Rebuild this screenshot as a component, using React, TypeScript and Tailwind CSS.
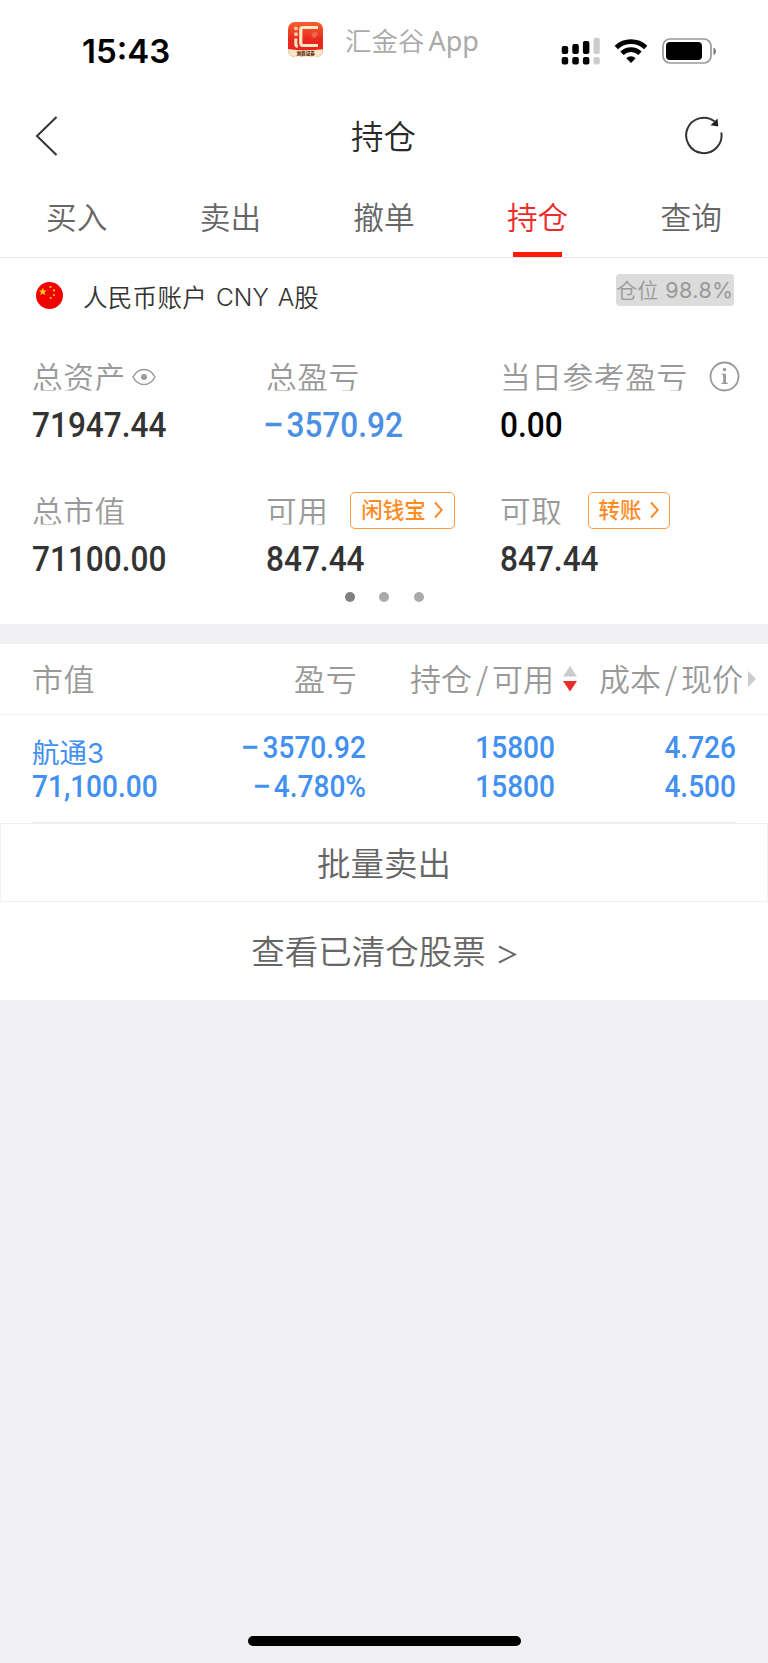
import type { ReactNode } from "react";

const CJK = "font-['Noto_Sans_CJK_SC',sans-serif] font-[350]";
const NUM = "font-['Roboto',sans-serif] font-medium whitespace-nowrap";

function StatusBar() {
  return (
    <div className="flex h-[100px] items-start text-black">
      <div className="w-[288px] pt-[33px] pl-[82px] font-['Inter',sans-serif] text-[33px] leading-[36px] font-semibold">
        15:43
      </div>
      <svg className="mt-[22px] h-[36px] w-[36px] shrink-0" viewBox="0 0 36 36">
        <defs>
          <linearGradient id="logo" x1="0" y1="0" x2="0" y2="1">
            <stop offset="0" stopColor="#f4602f" />
            <stop offset="0.5" stopColor="#e9281f" />
            <stop offset="1" stopColor="#e8201c" />
          </linearGradient>
          <clipPath id="logoClip">
            <rect width="35" height="35" rx="7" />
          </clipPath>
        </defs>
        <g clipPath="url(#logoClip)">
          <rect width="36" height="36" fill="url(#logo)" />
          <path d="M0 27 Q17 29.500 36 27 V36 H0Z" fill="#fbe6c8" />
        </g>
        <path d="M30 5.500 H14.500 Q12.800 5.500 12.800 7.500 V21 Q12.800 23.500 15 23.500 H30" fill="none" stroke="#fbe9c6" strokeWidth="3.200" />
        <circle cx="8" cy="6.500" r="2" fill="#f7c9a0" />
        <circle cx="8" cy="12.300" r="2" fill="#f7c9a0" />
        <path d="M7.800 16.500 V22.500 Q7.800 24 9.800 24.500" fill="none" stroke="#fbe9c6" strokeWidth="3" />
        <path d="M23.500 12.300 Q25 9.500 27 10.200 Q30.500 9.500 29.500 13 Q28 15.500 26.500 16 Q23 14.500 23.500 12.300Z" fill="#f0644a" />
        <text x="8.500" y="33" fontSize="5" fontWeight="900" textLength="18.500" lengthAdjust="spacingAndGlyphs" fill="#5e2c12" fontFamily="Noto Sans CJK SC, sans-serif">
          浙商证券
        </text>
      </svg>
      <div className={`${CJK} flex pt-[22px] pl-[21px] text-[26.500px] leading-[36px] whitespace-nowrap text-[#aaaaaa]`}>
        <span>汇金谷</span>
        <span className="pt-px pl-[4px] font-['Noto_Sans',sans-serif] text-[27px] font-normal">App</span>
      </div>
      <svg className="mt-[34px] ml-auto h-[34px] w-[156px] shrink-0" viewBox="560 34 156 34">
        <g fill="#000">
          <rect x="561.700" y="46" width="6.500" height="8" rx="2" />
          <rect x="572.300" y="44" width="6.500" height="10" rx="2" />
          <rect x="582.900" y="41" width="6.500" height="13" rx="2" />
          <rect x="593.500" y="37.700" width="6.300" height="16.300" rx="2" fill="#cccccc" />
          <rect x="561.700" y="57" width="6.500" height="7.600" rx="2" />
          <rect x="572.300" y="57" width="6.500" height="7.600" rx="2" />
          <rect x="582.900" y="57" width="6.500" height="7.600" rx="2" />
          <rect x="593.500" y="57" width="6.300" height="7.600" rx="2" fill="#cccccc" />
        </g>
        <g fill="none" stroke="#000" strokeWidth="4.800">
          <path d="M616.300 47.500 A21.500 21.500 0 0 1 645.700 47.500" />
          <path d="M622 53.300 A13 13 0 0 1 640 53.300" />
        </g>
        <path d="M631 63 L626.300 58.200 A6.700 6.700 0 0 1 635.700 58.200Z" />
        <rect x="663" y="39" width="48" height="24" rx="7" fill="none" stroke="#999" strokeWidth="1.700" />
        <rect x="666" y="42" width="36" height="18" rx="4" />
        <path d="M713.500 47.500 Q716 48.500 716 51.200 T713.500 55Z" fill="#777" />
      </svg>
      <div className="w-[52px] shrink-0" />
    </div>
  );
}

function TitleBar() {
  return (
    <div className="flex h-[72px] items-center justify-between pr-[44px] pl-[34px]">
      <svg className="h-[42px] w-[26px]" viewBox="0 0 26 42" fill="none" stroke="#333" strokeWidth="2">
        <path d="M22.500 2 L3 21 L22.500 40" />
      </svg>
      <h1 className={`${CJK} pb-[2px] pl-[23px] text-[32.500px] leading-[60px] text-[#2a2a2a]`}>持仓</h1>
      <svg className="h-[40px] w-[40px]" viewBox="684 116 40 40" fill="none" stroke="#333" strokeWidth="2">
        <path d="M721.300 132.500 A17.700 17.700 0 1 1 714.500 121.300" />
        <path d="M717.500 118.500 L718.300 126.500 L710.500 125.300Z" fill="#222" stroke="none" />
      </svg>
    </div>
  );
}

function Tabs() {
  const tabs = ["买入", "卖出", "撤单", "持仓", "查询"];
  return (
    <nav className="grid h-[86px] grid-cols-5 border-b border-[#e8e8e8]">
      {tabs.map((t) => (
        <div key={t} className="flex flex-col items-center justify-between">
          <span className={`${CJK} pt-[17px] text-[30.700px] leading-[54px] ${t === "持仓" ? "text-[#ee2a2a]" : "text-[#666]"}`}>{t}</span>
          <span className={`h-[5px] w-[49px] ${t === "持仓" ? "bg-[#ff1a0a]" : ""}`} />
        </div>
      ))}
    </nav>
  );
}

function Flag() {
  return (
    <svg className="mt-[24px] h-[27px] w-[27px] shrink-0" viewBox="0 0 27 27">
      <circle cx="13.500" cy="13.500" r="13.500" fill="#f00000" />
      <g fill="#ffd800">
        <path d="M6.800 5.500 L7.800 8.500 H10.900 L8.400 10.300 L9.400 13.300 L6.800 11.500 L4.200 13.300 L5.200 10.300 L2.700 8.500 H5.800Z" />
        <circle cx="14.500" cy="5" r="1.100" />
        <circle cx="18" cy="8.300" r="1.100" />
        <circle cx="18" cy="13" r="1.100" />
        <circle cx="14.700" cy="16" r="1.100" />
      </g>
    </svg>
  );
}

function Account() {
  return (
    <div className="flex h-[96px] items-start pr-[34px] pl-[36px]">
      <Flag />
      <div className={`${CJK} flex pt-[21px] pl-[20px] text-[24.500px] leading-[36px] whitespace-nowrap text-[#333]`}>
        <span className="tracking-[0.3px]">人民币账户</span>
        <span className="pl-[9px] font-['Inter',sans-serif]">CNY</span>
        <span className="pl-[9px] font-['Inter',sans-serif]">A</span>
        <span>股</span>
      </div>
      <div className={`${CJK} mt-[16px] ml-auto flex h-[32px] w-[118px] justify-center rounded-[4px] bg-[#dcdcdc] text-[21px] leading-[31px] whitespace-nowrap text-[#999]`}>
        <span>仓位</span>
        <span className="pt-px pl-[7px] font-['Inter',sans-serif] text-[21.500px] font-normal tracking-[0.400px]">98.8%</span>
      </div>
    </div>
  );
}

function Tag({ children, width }: { children: ReactNode; width: string }) {
  return (
    <span className={`-mt-[2px] flex h-[37px] items-center justify-center gap-[8px] rounded-[5px] border-[1.500px] border-[#ff9a45] font-['Noto_Sans_CJK_SC',sans-serif] text-[21.500px] leading-[30px] font-medium whitespace-nowrap text-[#ff8a1f] ${width}`}>
      <span className="-mt-[3px]">{children}</span>
      <svg className="h-[18px] w-[9px]" viewBox="0 0 9 18" fill="none" stroke="#ff8a1f" strokeWidth="1.900">
        <path d="M1 1.500 L7.800 9 L1 16.500" />
      </svg>
    </span>
  );
}

function Signed({ value }: { value: string }) {
  if (!value.startsWith("−")) return <>{value}</>;
  return (
    <>
      <span className="mr-[3px] inline-block origin-right scale-x-[1.200]">−</span>
      {value.slice(1)}
    </>
  );
}

function Stat({ label, value, tone = "text-[#333]", children }: { label: string; value: string; tone?: string; children?: ReactNode }) {
  return (
    <div className="h-[134px] w-[234px]">
      <div className="flex h-[46px] items-center">
        <span className={`${CJK} -mt-[3px] text-[30.700px] leading-[46px] tracking-[0.600px] whitespace-nowrap text-[#999] [clip-path:inset(10px_0_8px_0)]`}>{label}</span>
        {children}
      </div>
      <div className={`${NUM} mt-[3px] origin-left scale-x-[0.89] text-[35.500px] leading-[44px] ${tone}`}>
        <Signed value={value} />
      </div>
    </div>
  );
}

function Summary() {
  return (
    <section className="h-[270px]">
      <div className="flex pl-[32px]">
        <Stat label="总资产" value="71947.44">
          <svg className="ml-[6px] h-[18px] w-[24px]" viewBox="0 0 24 18" fill="none" stroke="#999" strokeWidth="1.500">
            <path d="M1 9 Q5 1.500 12 1.500 Q19 1.500 23 9 Q19 16.500 12 16.500 Q5 16.500 1 9Z" />
            <circle cx="12" cy="9" r="3" fill="#999" stroke="none" />
          </svg>
        </Stat>
        <Stat label="总盈亏" value="−3570.92" tone="text-[#4a90e2]" />
        <Stat label="当日参考盈亏" value="0.00" tone="text-black">
          <svg className="-mt-[2px] ml-[21px] h-[31px] w-[31px] shrink-0" viewBox="0 0 31 31">
            <circle cx="15.500" cy="15.500" r="14" fill="none" stroke="#999" strokeWidth="1.800" />
            <circle cx="15.500" cy="8.500" r="1.700" fill="#999" />
            <path d="M12.700 12.800 H17 V21.800 H18.700 V23 H12.500 V21.800 H14.200 V14 H12.700Z" fill="#999" />
          </svg>
        </Stat>
      </div>
      <div className="flex pl-[32px]">
        <Stat label="总市值" value="71100.00" />
        <Stat label="可用" value="847.44">
          <div className="pl-[21px]"><Tag width="w-[105px]">闲钱宝</Tag></div>
        </Stat>
        <Stat label="可取" value="847.44">
          <div className="pl-[25px]"><Tag width="w-[82px]">转账</Tag></div>
        </Stat>
      </div>
    </section>
  );
}

function Holdings() {
  return (
    <section className="bg-white">
      <div className={`${CJK} flex h-[71px] items-center border-b border-[#f3f3f3] pr-[12px] pl-[32px] text-[31px] leading-[64px] whitespace-nowrap text-[#999]`}>
        <span className="w-[262px] pb-[2px] tracking-[0.500px]">市值</span>
        <span className="w-[116px] pb-[2px] tracking-[0.800px]">盈亏</span>
        <span className="pb-[2px]">持仓</span>
        <span className="w-[20px] pb-[2px] text-center">/</span>
        <span className="pb-[2px]">可用</span>
        <svg className="ml-[9px] h-[26px] w-[14px]" viewBox="0 0 14 26">
          <path d="M7 0 L14 10.500 H0Z" fill="#ccc" />
          <path d="M7 25.500 L14 15 H0Z" fill="#ee2a2a" />
        </svg>
        <span className="pb-[2px] pl-[22px]">成本</span>
        <span className="w-[20px] pb-[2px] text-center">/</span>
        <span className="pb-[2px]">现价</span>
        <svg className="ml-[5px] h-[16px] w-[8px] shrink-0" viewBox="0 0 8 16">
          <path d="M0 0 L8 8 L0 16Z" fill="#ccc" />
        </svg>
      </div>
      <div className={`${NUM} mx-[32px] flex h-[108px] border-b border-[#eeeeee] pt-[13px] text-[31px] leading-[39px] text-[#4290f0]`}>
        <div className="w-[144px]">
          <div className="h-[39px] pt-[5px] font-['Noto_Sans_CJK_SC',sans-serif] text-[27.500px] leading-[36px] font-normal">
            航通<span className="font-['Inter',sans-serif]">3</span>
          </div>
          <div className="origin-left scale-x-[0.905]">71,100.00</div>
        </div>
        <div className="w-[190px] origin-right scale-x-[0.905] text-right">
          <div><Signed value="−3570.92" /></div>
          <div><Signed value="−4.780%" /></div>
        </div>
        <div className="w-[189px] origin-right scale-x-[0.905] text-right">
          <div>15800</div>
          <div>15800</div>
        </div>
        <div className="flex-1 origin-right scale-x-[0.905] text-right">
          <div>4.726</div>
          <div>4.500</div>
        </div>
      </div>
      <div className={`${CJK} h-[79px] border border-[#f0f0f0] text-center text-[33.500px] leading-[75px] text-[#666]`}>批量卖出</div>
      <div className={`${CJK} flex h-[98px] justify-center text-[33.500px] leading-[95px] text-[#666]`}>
        <span>查看已清仓股票</span>
        <svg className="mt-[43px] ml-[12px] h-[20px] w-[19px]" viewBox="0 0 19 20" fill="none" stroke="#666" strokeWidth="2">
          <path d="M1 1.500 L17 9.500 L1 17.500" />
        </svg>
      </div>
    </section>
  );
}

export default function App() {
  return (
    <main className="flex h-[1663px] w-[768px] flex-col overflow-hidden bg-[#f0f0f2]">
      <div className="bg-white">
        <StatusBar />
        <TitleBar />
        <Tabs />
        <Account />
        <Summary />
      </div>
      <div className="relative mb-[20px] h-0">
        <div className="absolute top-[-32px] left-[345px] flex">
          <i className="h-[10px] w-[10px] rounded-full bg-[#808080]" />
          <i className="ml-[24px] h-[10px] w-[10px] rounded-full bg-[#aaa]" />
          <i className="ml-[25px] h-[10px] w-[10px] rounded-full bg-[#aaa]" />
        </div>
      </div>
      <Holdings />
      <div className="mt-auto flex justify-center pb-[17px]">
        <div className="h-[10px] w-[273px] rounded-full bg-black" />
      </div>
    </main>
  );
}
